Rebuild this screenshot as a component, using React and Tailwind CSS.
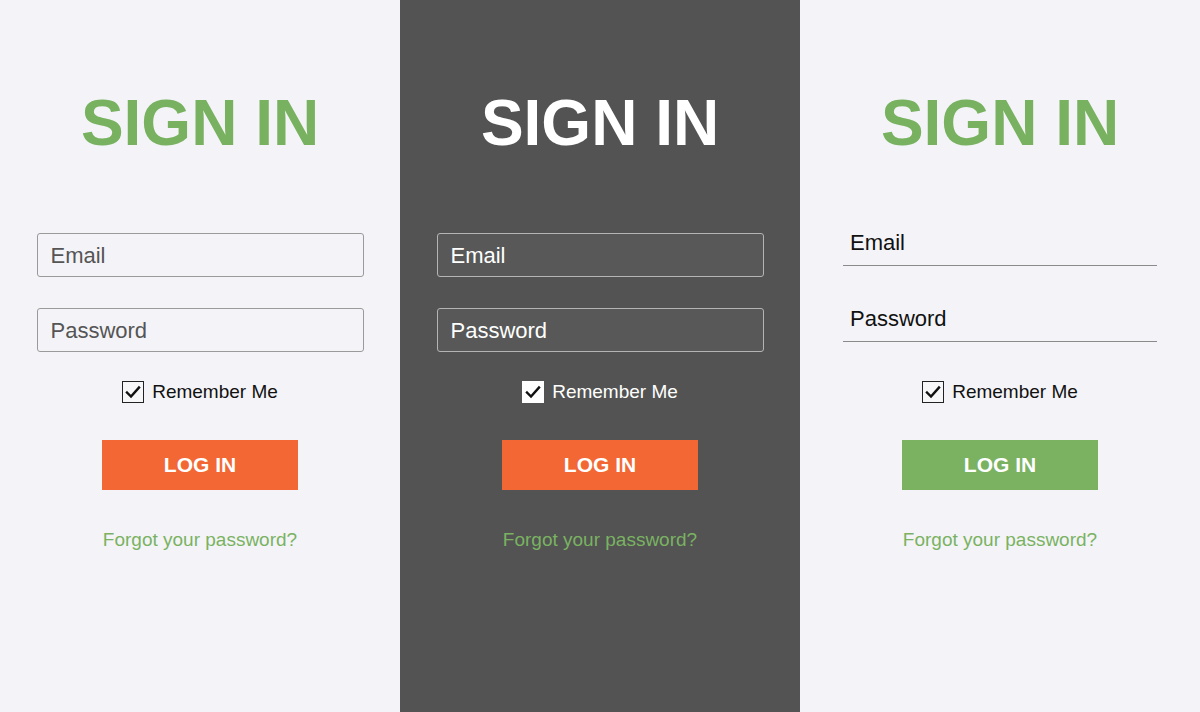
import React from "react";

const font = { fontFamily: '"Liberation Sans", Arial, sans-serif' };

function Check({ dark }) {
  return (
    <div
      className={
        dark
          ? "w-[22px] h-[22px] bg-white flex items-center justify-center"
          : "w-[22px] h-[22px] border-[1.5px] border-[#222] bg-[#f7f7f9] flex items-center justify-center"
      }
    >
      <svg width="16" height="14" viewBox="0 0 16 14">
        <path d="M2 7.5 L6 11.5 L14 2.5" fill="none" stroke="#111" strokeWidth="2.4" strokeLinecap="square" />
      </svg>
    </div>
  );
}

function Panel({ variant }) {
  const dark = variant === "dark";
  const line = variant === "line";
  return (
    <div
      className={
        "w-[400px] h-[712px] flex flex-col items-center " +
        (dark ? "bg-[#525352]" : "bg-[#f4f4f8]")
      }
    >
      <h1
        className={
          "mt-[91px] text-[64px] leading-[64px] font-bold " +
          (dark ? "text-white" : "text-[#78b260]")
        }
      >
        SIGN IN
      </h1>
      {line ? (
        <>
          <div className="mt-[76px] w-[314px] pb-[10px] pl-[7px] border-b border-[#8a8a8a] text-[22px] leading-[24px] text-[#111]">
            Email
          </div>
          <div className="mt-[41px] w-[314px] pb-[10px] pl-[7px] border-b border-[#8a8a8a] text-[22px] leading-[24px] text-[#111]">
            Password
          </div>
          <div className="mt-[39px] flex items-center gap-[8px]">
            <Check />
            <span className="text-[19px] leading-[22px] text-[#111]">Remember Me</span>
          </div>
        </>
      ) : (
        <>
          <div
            className={
              "mt-[78px] w-[327px] h-[44px] rounded-[3px] border-[1.5px] flex items-center pl-[13px] text-[22px] " +
              (dark ? "border-[#b4b4b4] bg-[#575857] text-white" : "border-[#9a9a9a] bg-[#f4f4f8] text-[#555]")
            }
          >
            Email
          </div>
          <div
            className={
              "mt-[31px] w-[327px] h-[44px] rounded-[3px] border-[1.5px] flex items-center pl-[13px] text-[22px] " +
              (dark ? "border-[#b4b4b4] bg-[#575857] text-white" : "border-[#9a9a9a] bg-[#f4f4f8] text-[#555]")
            }
          >
            Password
          </div>
          <div className="mt-[29px] flex items-center gap-[8px]">
            <Check dark={dark} />
            <span className={"text-[19px] leading-[22px] " + (dark ? "text-white" : "text-[#111]")}>
              Remember Me
            </span>
          </div>
        </>
      )}
      <div
        className={
          "mt-[37px] w-[196px] h-[50px] flex items-center justify-center text-white font-bold text-[21px] " +
          (line ? "bg-[#7ab262]" : "bg-[#f26733]")
        }
      >
        LOG IN
      </div>
      <div className="mt-[39px] text-[19px] leading-[22px] text-[#7ab262]">Forgot your password?</div>
    </div>
  );
}

export default function App() {
  return (
    <div className="w-[1200px] h-[712px] flex overflow-hidden" style={font}>
      <Panel variant="light" />
      <Panel variant="dark" />
      <Panel variant="line" />
    </div>
  );
}
